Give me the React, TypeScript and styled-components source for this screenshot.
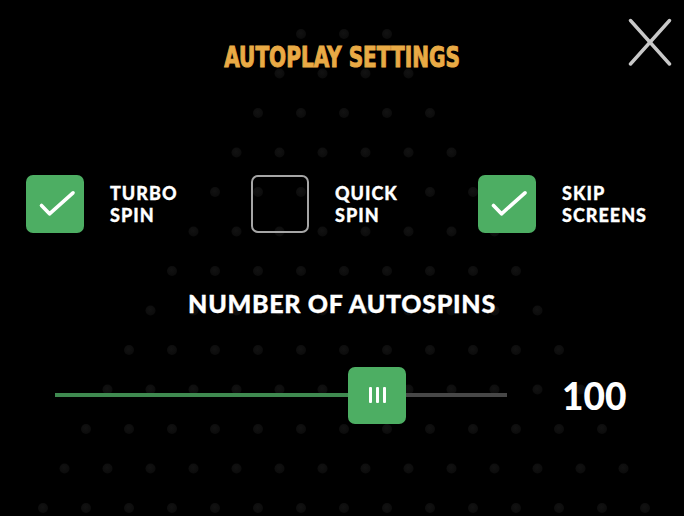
import React from "react";
import styled, { createGlobalStyle } from "styled-components";

const GlobalStyle = createGlobalStyle`
  html, body {
    margin: 0;
    padding: 0;
    background: #000;
  }
  body {
    font-family: Lato, "Noto Sans", sans-serif;
  }
`;

const Screen = styled.div`
  position: relative;
  width: 684px;
  height: 516px;
  overflow: hidden;
  background: #000;
`;

const Backdrop = styled.svg`
  position: absolute;
  left: 0;
  top: 0;
  pointer-events: none;
`;

const Content = styled.div`
  position: relative;
  display: flex;
  flex-direction: column;
  height: 100%;
`;

const Header = styled.header`
  height: 115px;
  display: flex;
  align-items: center;
  justify-content: center;
`;

const Title = styled.h1`
  margin: 0;
  font-family: "DejaVu Sans Condensed", "DejaVu Sans", sans-serif;
  font-weight: 700;
  font-size: 29px;
  line-height: 1;
  color: #e9aa45;
  white-space: nowrap;
  -webkit-text-stroke: 1px #e9aa45;
  transform: scaleX(0.77);
`;

const CloseButton = styled.button`
  position: absolute;
  top: 18px;
  right: 12px;
  width: 44px;
  height: 48px;
  padding: 0;
  border: 0;
  background: transparent;
  cursor: pointer;
  display: flex;
`;

const OptionsRow = styled.div`
  margin-top: 60px;
  padding-left: 26px;
  display: grid;
  grid-template-columns: 225px 227px 1fr;
`;

const Option = styled.label`
  display: flex;
  align-items: center;
  gap: 26px;
  cursor: pointer;
`;

const Box = styled.span<{ $checked: boolean }>`
  flex: none;
  width: ${(p) => (p.$checked ? 58 : 54)}px;
  height: ${(p) => (p.$checked ? 58 : 54)}px;
  border-radius: 7px;
  display: flex;
  align-items: center;
  justify-content: center;
  background: ${(p) => (p.$checked ? "#4dae63" : "transparent")};
  border: ${(p) => (p.$checked ? "none" : "2px solid #a6a6a6")};
`;

const OptionLabel = styled.span`
  font-family: Lato, "Noto Sans", sans-serif;
  font-weight: 900;
  font-size: 18px;
  line-height: 22px;
  color: #fff;
  text-transform: uppercase;
  letter-spacing: 1px;
  -webkit-text-stroke: 0.3px #fff;
`;

const SectionHeading = styled.h2`
  margin: 58px 0 0;
  text-align: center;
  font-family: Lato, "Noto Sans", sans-serif;
  font-weight: 900;
  font-size: 25px;
  line-height: 25px;
  color: #fff;
  text-transform: uppercase;
  letter-spacing: 0.7px;
  -webkit-text-stroke: 0.3px #fff;
`;

const SliderRow = styled.div`
  margin-top: 50px;
  padding-left: 55px;
  height: 58px;
  display: flex;
  align-items: center;
`;

const Track = styled.div`
  position: relative;
  width: 452px;
  height: 4px;
  background: #474747;
`;

const TrackFill = styled.div`
  position: absolute;
  left: 0;
  top: 0;
  height: 100%;
  background: #3f8a50;
`;

const Thumb = styled.div`
  position: absolute;
  top: 50%;
  width: 58px;
  height: 57px;
  margin-left: -29px;
  margin-top: -28.5px;
  border-radius: 7px;
  background: #4dae63;
  display: flex;
  align-items: center;
  justify-content: center;
  gap: 4px;
`;

const Grip = styled.span`
  width: 3px;
  height: 16px;
  border-radius: 1px;
  background: #fff;
`;

const Value = styled.span`
  margin-left: 55px;
  font-family: Lato, "Noto Sans", sans-serif;
  font-weight: 900;
  font-size: 37px;
  line-height: 1;
  color: #fff;
`;

const CheckIcon = () => (
  <svg width="58" height="58" viewBox="0 0 58 58">
    <polyline
      points="15.5,30.5 23.5,38.8 47,17.8"
      fill="none"
      stroke="#fff"
      strokeWidth="3.6"
      strokeLinecap="round"
      strokeLinejoin="round"
    />
  </svg>
);

const CloseIcon = () => (
  <svg width="44" height="48" viewBox="0 0 44 48">
    <g stroke="#c8c8c8" strokeWidth="3.4" strokeLinecap="round">
      <line x1="2.5" y1="2.5" x2="41.5" y2="46" />
      <line x1="41.5" y1="2.5" x2="2.5" y2="46" />
    </g>
  </svg>
);

const Pegs = () => {
  const dots: { x: number; y: number }[] = [];
  for (let k = 0; k <= 12; k++) {
    const n = k + 3;
    const y = 34 + 39.5 * k;
    for (let i = 0; i < n; i++) {
      dots.push({ x: 344 + (i - (n - 1) / 2) * 43, y });
    }
  }
  return (
    <Backdrop width="684" height="516" viewBox="0 0 684 516">
      <defs>
        <radialGradient id="peg" cx="45%" cy="40%" r="60%">
          <stop offset="0%" stopColor="#121212" />
          <stop offset="100%" stopColor="#0b0b0b" />
        </radialGradient>
      </defs>
      {dots.map((d, i) => (
        <circle key={i} cx={d.x} cy={d.y} r="5" fill="url(#peg)" />
      ))}
    </Backdrop>
  );
};

const options = [
  { lines: ["Turbo", "Spin"], checked: true },
  { lines: ["Quick", "Spin"], checked: false },
  { lines: ["Skip", "Screens"], checked: true },
];

export default function App() {
  const min = 0;
  const max = 140;
  const value = 100;
  const pct = ((value - min) / (max - min)) * 100 * 0.998;
  return (
    <>
      <GlobalStyle />
      <Screen>
        <Pegs />
        <Content>
          <Header>
            <Title>AUTOPLAY SETTINGS</Title>
          </Header>
          <CloseButton aria-label="Close">
            <CloseIcon />
          </CloseButton>
          <OptionsRow>
            {options.map((o) => (
              <Option key={o.lines.join(" ")}>
                <Box $checked={o.checked}>{o.checked && <CheckIcon />}</Box>
                <OptionLabel>
                  {o.lines[0]}
                  <br />
                  {o.lines[1]}
                </OptionLabel>
              </Option>
            ))}
          </OptionsRow>
          <SectionHeading>Number of autospins</SectionHeading>
          <SliderRow>
            <Track>
              <TrackFill style={{ width: `${pct}%` }} />
              <Thumb style={{ left: `${pct}%` }}>
                <Grip />
                <Grip />
                <Grip />
              </Thumb>
            </Track>
            <Value>{value}</Value>
          </SliderRow>
        </Content>
      </Screen>
    </>
  );
}
